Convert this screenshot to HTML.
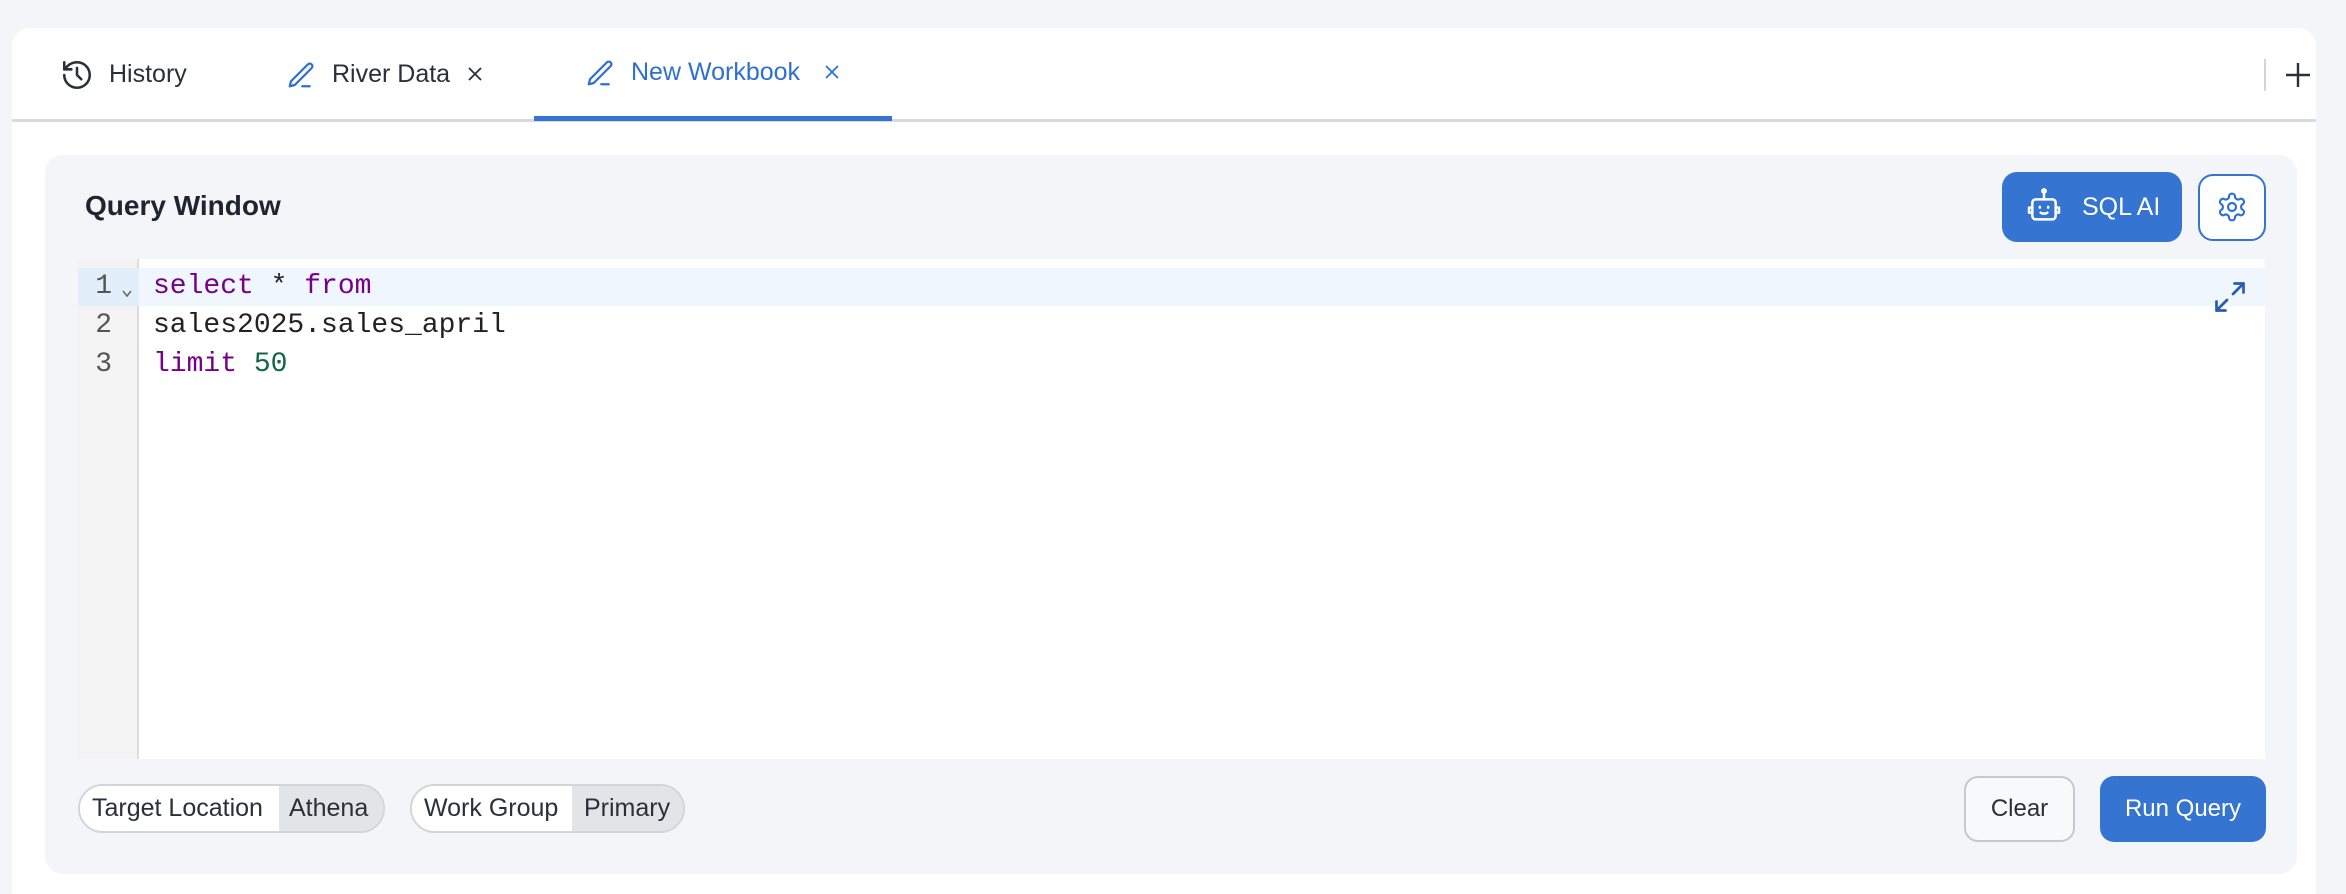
<!DOCTYPE html>
<html><head><meta charset="utf-8">
<style>
*{box-sizing:border-box;margin:0;padding:0}
html,body{width:2346px;height:894px;overflow:hidden}
body{background:#f4f5f9;font-family:"Liberation Sans",sans-serif;position:relative;color:#2b2f38}
.card{position:absolute;left:12px;top:28px;width:2304px;height:866px;background:#fff;border-radius:18px 18px 0 0}
.tabline{position:absolute;left:12px;top:119px;width:2304px;height:3px;background:#d9dae1}
.abs{position:absolute}
.tab{position:absolute;font-size:25px;top:59px;line-height:30px}
.ul{position:absolute;left:534px;top:116px;width:358px;height:5px;background:#3574d1}
.panel{position:absolute;left:45px;top:155px;width:2252px;height:719px;background:#f4f5f9;border-radius:18px}
.title{position:absolute;left:85px;top:190px;font-size:28px;font-weight:bold;color:#1f2430}
.btn{position:absolute;border-radius:15px}
.editor{position:absolute;left:78px;top:259px;width:2187px;height:500px;background:#fff}
.gutter{position:absolute;left:0;top:0;width:61px;height:500px;background:#f3f3f3;border-right:2px solid #dcdcdc}
.active{position:absolute;left:0;top:9px;width:2187px;height:38px;background:#eff6fd}
.agut{position:absolute;left:0;top:9px;width:61px;height:38px;background:#e3eefb}
.code{position:absolute;font-family:"Liberation Mono","DejaVu Sans Mono",monospace;font-size:28px;line-height:39px}
.k{color:#770088}.n{color:#116644}
.pill{position:absolute;top:784px;height:49px;border:2px solid #d3d5da;border-radius:25px;overflow:hidden;display:flex;font-size:25px;line-height:45px;color:#2b2f38}
.pill span{display:block}
.pill .g{background:#e3e4e8}
</style></head><body>
<div class="card"></div>
<div class="tabline"></div>

<svg class="abs" style="left:60px;top:58px" width="34" height="34" viewBox="0 0 24 24" fill="none" stroke="#2b2f38" stroke-width="1.8" stroke-linecap="round" stroke-linejoin="round"><path d="M3 12a9 9 0 1 0 9-9 9.75 9.75 0 0 0-6.74 2.74L3 8"/><path d="M3 3v5h5"/><path d="M12 7v5l3 3"/></svg>
<div class="tab" style="left:109px">History</div>

<svg class="abs" style="left:286px;top:60px" width="30" height="30" viewBox="0 0 24 24" fill="none" stroke="#2f6fd0" stroke-width="1.8" stroke-linecap="round" stroke-linejoin="round"><path d="M13 21h6"/><path d="M17.5 3.5a2.1 2.1 0 0 1 3 3L7 20l-4 1 1-4Z"/></svg>
<div class="tab" style="left:332px">River Data</div>
<svg class="abs" style="left:467px;top:66px" width="16" height="16" viewBox="0 0 16 16" stroke="#2b2f38" stroke-width="1.8"><path d="M2 2l12 12M14 2L2 14"/></svg>

<svg class="abs" style="left:585px;top:58px" width="30" height="30" viewBox="0 0 24 24" fill="none" stroke="#2f6fd0" stroke-width="1.8" stroke-linecap="round" stroke-linejoin="round"><path d="M13 21h6"/><path d="M17.5 3.5a2.1 2.1 0 0 1 3 3L7 20l-4 1 1-4Z"/></svg>
<div class="tab" style="left:631px;top:57px;color:#2f6fd0">New Workbook</div>
<svg class="abs" style="left:824px;top:64px" width="16" height="16" viewBox="0 0 16 16" stroke="#2f6fd0" stroke-width="1.8"><path d="M2 2l12 12M14 2L2 14"/></svg>
<div class="ul"></div>

<div class="abs" style="left:2264px;top:59px;width:2px;height:32px;background:#d3d5da"></div>
<svg class="abs" style="left:2284px;top:61px" width="28" height="28" viewBox="0 0 28 28" stroke="#2b2f38" stroke-width="2.4"><path d="M14 2v24M2 14h24"/></svg>

<div class="panel"></div>
<div class="title">Query Window</div>

<div class="btn" style="left:2002px;top:172px;width:180px;height:70px;background:#3574d1"></div>
<svg class="abs" style="left:2024px;top:186px" width="40" height="40" viewBox="0 0 24 24" fill="none" stroke="#fff" stroke-width="1.5" stroke-linecap="round" stroke-linejoin="round"><path d="M12 8V4"/><circle cx="12" cy="3" r="1"/><rect x="5" y="8" width="14" height="12" rx="2"/><path d="M3 13v3M21 13v3M3 13h2M19 13h2M3 16h2M19 16h2"/><path d="M9.5 12.5v.5M14.5 12.5v.5"/><path d="M10 16c1 .8 3 .8 4 0"/></svg>
<div class="abs" style="left:2082px;top:192px;font-size:25px;color:#fff;line-height:30px">SQL AI</div>

<div class="btn" style="left:2198px;top:174px;width:68px;height:67px;border:2px solid #3574d1;background:#fff"></div>
<svg class="abs" style="left:2216px;top:191px" width="32" height="32" viewBox="0 0 24 24" fill="none" stroke="#2f6fd0" stroke-width="1.6" stroke-linecap="round" stroke-linejoin="round"><path d="M12.22 2h-.44a2 2 0 0 0-2 2v.18a2 2 0 0 1-1 1.73l-.43.25a2 2 0 0 1-2 0l-.15-.08a2 2 0 0 0-2.730.73l-.22.38a2 2 0 0 0 .73 2.73l.15.1a2 2 0 0 1 1 1.72v.51a2 2 0 0 1-1 1.74l-.15.09a2 2 0 0 0-.73 2.73l.22.38a2 2 0 0 0 2.73.73l.15-.08a2 2 0 0 1 2 0l.43.25a2 2 0 0 1 1 1.73V20a2 2 0 0 0 2 2h.44a2 2 0 0 0 2-2v-.18a2 2 0 0 1 1-1.73l.43-.25a2 2 0 0 1 2 0l.15.08a2 2 0 0 0 2.73-.73l.22-.39a2 2 0 0 0-.73-2.73l-.15-.08a2 2 0 0 1-1-1.74v-.5a2 2 0 0 1 1-1.740l.15-.09a2 2 0 0 0 .73-2.73l-.22-.38a2 2 0 0 0-2.73-.73l-.15.08a2 2 0 0 1-2 0l-.43-.25a2 2 0 0 1-1-1.73V4a2 2 0 0 0-2-2z"/><circle cx="12" cy="12" r="3"/></svg>

<div class="editor">
  <div class="active"></div>
  <div class="gutter"></div>
  <div class="agut"></div>
  <div class="code" style="left:8px;top:8px;color:#555;width:26px;text-align:right">1<br>2<br>3</div>
  <svg class="abs" style="left:43px;top:30px" width="12" height="10" viewBox="0 0 12 10" fill="none" stroke="#666" stroke-width="1.5"><path d="M2 2l4 5 4-5"/></svg>
  <div class="code" style="left:75px;top:8px;color:#222"><span class="k">select</span> * <span class="k">from</span><br>sales2025.sales_april<br><span class="k">limit</span> <span class="n">50</span></div>
  <svg class="abs" style="left:2134px;top:20px" width="36" height="36" viewBox="0 0 24 24" fill="none" stroke="#2a5db0" stroke-width="1.8" stroke-linecap="round" stroke-linejoin="round"><path d="M15 3h6v6"/><path d="M9 21H3v-6"/><path d="M21 3l-7 7"/><path d="M3 21l7-7"/></svg>
</div>

<div class="pill" style="left:78px;width:307px"><span style="background:#fff;width:199px;padding-left:12px">Target Location</span><span class="g" style="flex:1;padding-left:10px">Athena</span></div>
<div class="pill" style="left:410px;width:275px"><span style="background:#fff;width:160px;padding-left:12px">Work Group</span><span class="g" style="flex:1;padding-left:12px">Primary</span></div>

<div class="btn" style="left:1964px;top:776px;width:111px;height:66px;border:2px solid #c5c8ce;background:#f8f9fb;border-radius:14px;font-size:24px;line-height:62px;text-align:center;color:#2b2f38">Clear</div>
<div class="btn" style="left:2100px;top:776px;width:166px;height:66px;background:#3574d1;border-radius:14px;font-size:24px;line-height:66px;text-align:center;color:#fff">Run Query</div>
</body></html>
